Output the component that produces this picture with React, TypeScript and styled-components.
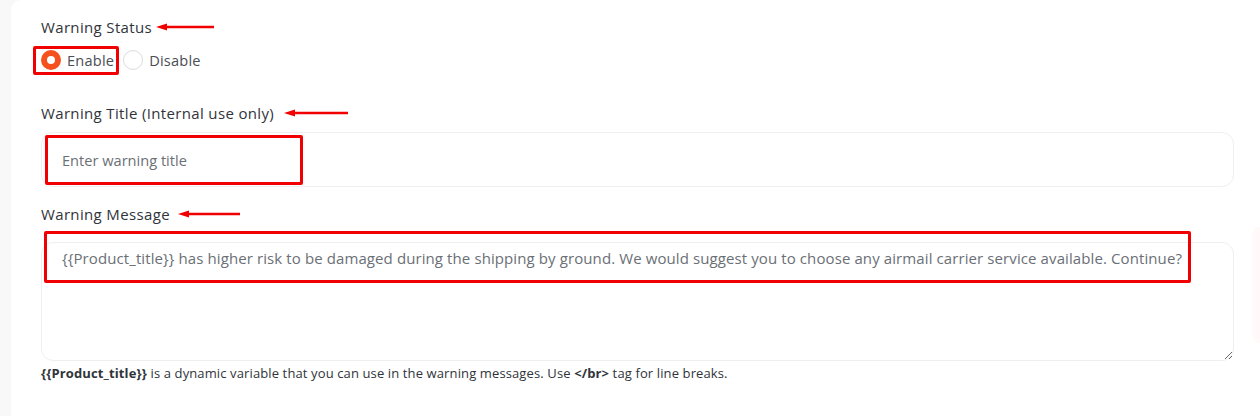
import React from "react";
import styled, { createGlobalStyle } from "styled-components";

const GlobalStyle = createGlobalStyle`
  html, body {
    margin: 0;
    padding: 0;
    background: #f8f8f8;
  }
  body {
    font-family: "Open Sans", "Liberation Sans", sans-serif;
    color: #30343a;
  }
`;

const annotationRed = "#f00000";

const Page = styled.div`
  display: flex;
  min-height: 416px;
  padding-left: 11px;
`;

const Card = styled.div`
  flex: 1;
  display: grid;
  grid-template-columns: 1193px 1fr;
  column-gap: 18px;
  background: #fff;
  border-radius: 10px 0 0 0;
  padding: 17px 0 0 30px;
`;

const Form = styled.div`
  display: flex;
  flex-direction: column;
`;

const SidePanel = styled.div`
  margin-top: 210px;
  height: 116px;
  background: #fff9fa;
  border-radius: 14px 0 0 14px;
`;

const Label = styled.div<{ $gap: number }>`
  display: flex;
  align-items: center;
  gap: ${(p) => p.$gap}px;
  font-size: 15px;
  line-height: 20px;
  font-weight: 500;
  letter-spacing: 0.35px;
  color: #30343a;
`;

const Section = styled.div<{ $top: number }>`
  display: flex;
  flex-direction: column;
  margin-top: ${(p) => p.$top}px;
`;

const RadioRow = styled.div`
  display: flex;
  align-items: center;
  gap: 9px;
  margin-top: 13px;
  height: 20px;
`;

const RadioOption = styled.label`
  position: relative;
  display: flex;
  align-items: center;
  gap: 6px;
  font-size: 14.6px;
  letter-spacing: 0.2px;
  color: #4a4e55;
  cursor: pointer;
`;

const RadioDot = styled.span<{ $checked?: boolean }>`
  box-sizing: border-box;
  width: 20px;
  height: 20px;
  border-radius: 50%;
  border: ${(p) => (p.$checked ? "6px solid #f4511e" : "1.5px solid #dcdcdc")};
  background: #fff;
`;

const Highlight = styled.span<{
  $top: number;
  $left: number;
  $width: number;
  $height: number;
}>`
  position: absolute;
  top: ${(p) => p.$top}px;
  left: ${(p) => p.$left}px;
  width: ${(p) => p.$width}px;
  height: ${(p) => p.$height}px;
  box-sizing: border-box;
  border: 3px solid ${annotationRed};
  border-radius: 2px;
  pointer-events: none;
`;

const FieldWrap = styled.div<{ $top: number }>`
  position: relative;
  margin-top: ${(p) => p.$top}px;
`;

const TextInput = styled.input`
  box-sizing: border-box;
  display: block;
  width: 100%;
  height: 55px;
  padding: 0 20px;
  border: 1px solid #efefef;
  border-radius: 12px;
  font-family: inherit;
  font-size: 14.6px;
  color: #6b6f76;
  outline: none;
  background: #fff;

  &::placeholder {
    color: #6b6f76;
  }
`;

const MessageArea = styled.textarea`
  box-sizing: border-box;
  display: block;
  width: 100%;
  height: 119px;
  padding: 5px 20px;
  border: 1px solid #efefef;
  border-radius: 12px;
  font-family: inherit;
  font-size: 15px;
  letter-spacing: 0.1px;
  line-height: 20px;
  color: #6b6f76;
  outline: none;
  resize: vertical;
  background: #fff;
`;

const Hint = styled.p`
  margin: 5px 0 0;
  font-size: 13px;
  letter-spacing: 0.12px;
  line-height: 14px;
  color: #30343a;

  b {
    font-weight: 700;
  }
`;

const Arrow: React.FC<{ width: number }> = ({ width }) => (
  <svg width={width} height="8" viewBox={`0 0 ${width} 8`} aria-hidden>
    <line x1="8" y1="4" x2={width} y2="4" stroke={annotationRed} strokeWidth="2.5" />
    <polygon points="0,4 11,0.5 11,7.5" fill={annotationRed} />
  </svg>
);

const message =
  "{{Product_title}} has higher risk to be damaged during the shipping by ground. We would suggest you to choose any airmail carrier service available. Continue?";

export default function App() {
  return (
    <>
      <GlobalStyle />
      <Page>
        <Card>
          <Form>
            <Label $gap={4}>
              Warning Status
              <Arrow width={58} />
            </Label>
            <RadioRow>
              <RadioOption>
                <RadioDot $checked />
                Enable
                <Highlight $top={-4} $left={-8} $width={86} $height={29} />
              </RadioOption>
              <RadioOption>
                <RadioDot />
                Disable
              </RadioOption>
            </RadioRow>

            <Section $top={33}>
              <Label $gap={10}>
                Warning Title (Internal use only)
                <Arrow width={64} />
              </Label>
              <FieldWrap $top={9}>
                <TextInput placeholder="Enter warning title" />
                <Highlight $top={3} $left={4} $width={258} $height={50} />
              </FieldWrap>
            </Section>

            <Section $top={17}>
              <Label $gap={8}>
                Warning Message
                <Arrow width={62} />
              </Label>
              <FieldWrap $top={18}>
                <MessageArea defaultValue={message} />
                <Highlight $top={-11} $left={3} $width={1147} $height={52} />
              </FieldWrap>
              <Hint>
                <b>{"{{Product_title}}"}</b> is a dynamic variable that you can use in the
                warning messages. Use <b>{"</br>"}</b> tag for line breaks.
              </Hint>
            </Section>
          </Form>
          <SidePanel />
        </Card>
      </Page>
    </>
  );
}
